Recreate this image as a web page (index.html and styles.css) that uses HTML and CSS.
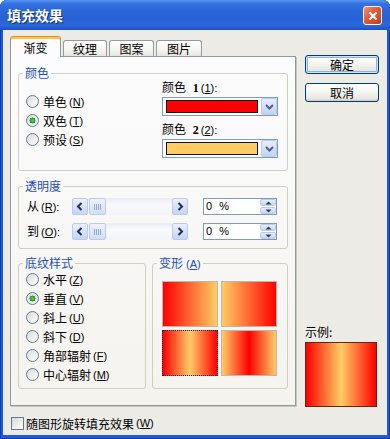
FILE: index.html
```html
<!DOCTYPE html>
<html lang="zh">
<head>
<meta charset="utf-8">
<title>填充效果</title>
<link rel="stylesheet" href="styles.css">
</head>
<body>
<div class="window">
  <div class="titlebar">
    <span class="title">填充效果</span>
    <div class="close"><svg class="xicon" width="10" height="10" viewBox="0 0 10 10"><path d="M1.5 1.5 L8.5 8.5 M8.5 1.5 L1.5 8.5" stroke="#ffffff" stroke-width="2.2" fill="none"/></svg></div>
  </div>
  <div class="client">
    <div class="main">
      <div class="tabctl">
        <div class="tabs">
          <div class="tab active">渐变</div>
          <div class="tab t2">纹理</div>
          <div class="tab t3">图案</div>
          <div class="tab t4">图片</div>
        </div>
        <div class="panel">
          <fieldset class="group g-color">
            <legend>颜色</legend>
            <div class="inner">
              <div class="radios">
                <div class="radio"><span class="rb"></span><span>单色</span><span class="mn">(<u>N</u>)</span></div>
                <div class="radio"><span class="rb on"></span><span>双色</span><span class="mn">(<u>T</u>)</span></div>
                <div class="radio"><span class="rb"></span><span>预设</span><span class="mn">(<u>S</u>)</span></div>
              </div>
              <div class="colors">
                <div class="lbl">颜色 <b class="num">1</b><span class="mn">(<u>1</u>):</span></div>
                <div class="combo"><span class="swatch sw-red"></span><span class="ddbtn"><svg width="9" height="6" viewBox="0 0 9 6"><path d="M1 1 L4.5 4.5 L8 1" stroke="#4D6185" stroke-width="2" fill="none"/></svg></span></div>
                <div class="lbl lbl2">颜色 <b class="num">2</b><span class="mn">(<u>2</u>):</span></div>
                <div class="combo"><span class="swatch sw-yel"></span><span class="ddbtn"><svg width="9" height="6" viewBox="0 0 9 6"><path d="M1 1 L4.5 4.5 L8 1" stroke="#4D6185" stroke-width="2" fill="none"/></svg></span></div>
              </div>
            </div>
          </fieldset>

          <fieldset class="group g-trans">
            <legend>透明度</legend>
            <div class="inner">
              <div class="trow">
                <span class="tlbl">从<span class="mn">(<u>R</u>):</span></span>
                <div class="scroll">
                  <span class="sbtn"><svg width="8" height="9" viewBox="0 0 8 9"><path d="M5.5 1 L2 4.5 L5.5 8" stroke="#1E2F55" stroke-width="2" fill="none"/></svg></span>
                  <span class="track"><span class="thumb"><svg width="8" height="6" viewBox="0 0 8 6"><path d="M0.5 0 V6 M2.5 0 V6 M4.5 0 V6 M6.5 0 V6" stroke="#8FA6D6" stroke-width="1"/></svg></span></span>
                  <span class="sbtn"><svg width="8" height="9" viewBox="0 0 8 9"><path d="M2.5 1 L6 4.5 L2.5 8" stroke="#1E2F55" stroke-width="2" fill="none"/></svg></span>
                </div>
                <div class="edit">
                  <span class="val">0 %</span>
                  <span class="spin">
                    <span class="sp"><svg width="7" height="4" viewBox="0 0 7 4"><path d="M0.5 3.5 L3.5 0.5 L6.5 3.5 Z" fill="#2B3D66"/></svg></span>
                    <span class="sp"><svg width="7" height="4" viewBox="0 0 7 4"><path d="M0.5 0.5 L3.5 3.5 L6.5 0.5 Z" fill="#2B3D66"/></svg></span>
                  </span>
                </div>
              </div>
              <div class="trow">
                <span class="tlbl">到<span class="mn">(<u>O</u>):</span></span>
                <div class="scroll">
                  <span class="sbtn"><svg width="8" height="9" viewBox="0 0 8 9"><path d="M5.5 1 L2 4.5 L5.5 8" stroke="#1E2F55" stroke-width="2" fill="none"/></svg></span>
                  <span class="track"><span class="thumb"><svg width="8" height="6" viewBox="0 0 8 6"><path d="M0.5 0 V6 M2.5 0 V6 M4.5 0 V6 M6.5 0 V6" stroke="#8FA6D6" stroke-width="1"/></svg></span></span>
                  <span class="sbtn"><svg width="8" height="9" viewBox="0 0 8 9"><path d="M2.5 1 L6 4.5 L2.5 8" stroke="#1E2F55" stroke-width="2" fill="none"/></svg></span>
                </div>
                <div class="edit">
                  <span class="val">0 %</span>
                  <span class="spin">
                    <span class="sp"><svg width="7" height="4" viewBox="0 0 7 4"><path d="M0.5 3.5 L3.5 0.5 L6.5 3.5 Z" fill="#2B3D66"/></svg></span>
                    <span class="sp"><svg width="7" height="4" viewBox="0 0 7 4"><path d="M0.5 0.5 L3.5 3.5 L6.5 0.5 Z" fill="#2B3D66"/></svg></span>
                  </span>
                </div>
              </div>
            </div>
          </fieldset>

          <div class="bottom">
            <fieldset class="group g-shade">
              <legend>底纹样式</legend>
              <div class="inner">
                <div class="radio"><span class="rb"></span><span>水平</span><span class="mn">(<u>Z</u>)</span></div>
                <div class="radio"><span class="rb on"></span><span>垂直</span><span class="mn">(<u>V</u>)</span></div>
                <div class="radio"><span class="rb"></span><span>斜上</span><span class="mn">(<u>U</u>)</span></div>
                <div class="radio"><span class="rb"></span><span>斜下</span><span class="mn">(<u>D</u>)</span></div>
                <div class="radio"><span class="rb"></span><span>角部辐射</span><span class="mn">(<u>F</u>)</span></div>
                <div class="radio"><span class="rb"></span><span>中心辐射</span><span class="mn">(<u>M</u>)</span></div>
              </div>
            </fieldset>
            <fieldset class="group g-variant">
              <legend>变形<span class="mn">(<u>A</u>)</span></legend>
              <div class="inner">
                <div class="cell v1"></div>
                <div class="cell v2"></div>
                <div class="cell v3 sel"></div>
                <div class="cell v4"></div>
              </div>
            </fieldset>
          </div>
        </div>
      </div>
      <div class="side">
        <button class="btn default">确定</button>
        <button class="btn cancel">取消</button>
        <div class="sample">
          <div class="slbl">示例:</div>
          <div class="preview"></div>
        </div>
      </div>
    </div>
    <div class="check"><span class="cb"></span><span>随图形旋转填充效果</span><span class="mn">(<u>W</u>)</span></div>
  </div>
</div>
</body>
</html>
```
FILE: styles.css
```css
html, body {
  margin: 0;
  padding: 0;
  background: #ffffff;
}
body {
  font-family: "Noto Sans CJK SC", "Liberation Sans", sans-serif;
  font-size: 12px;
  color: #000;
}
.window {
  width: 390px;
  height: 439px;
  box-sizing: border-box;
  display: flex;
  flex-direction: column;
  padding: 0 3px 4px 3px;
  background: #1F5BD8;
  border-radius: 7px 7px 0 0;
  box-shadow: inset 0 0 0 1px #0A3CB8;
}
.titlebar {
  height: 30px;
  margin: 0 -3px;
  padding: 0 8px 0 7px;
  display: flex;
  align-items: center;
  justify-content: space-between;
  border-radius: 7px 7px 0 0;
  background: linear-gradient(to bottom, #5A96F2 0%, #3473E0 12%, #2A66D8 35%, #2862D6 65%, #2B66DB 85%, #1D52C4 100%);
}
.title {
  color: #fff;
  font-weight: bold;
  font-size: 14px;
  line-height: 16px;
  text-shadow: 1px 1px 0 #10307A;
}
.close {
  width: 19px;
  height: 19px;
  flex: none;
  box-sizing: border-box;
  border: 1px solid #F4F4F4;
  border-radius: 3px;
  background-color: #D9552E;
  background-image: linear-gradient(135deg, #EC9472 0%, #DD5C34 45%, #C23E1B 100%);
  display: flex;
  align-items: center;
  justify-content: center;
  margin-top: 1px;
}
.xicon {
  display: block;
}
.client {
  flex: 1;
  background: #ECEBE6;
  padding: 6px 8px 0 7px;
  display: flex;
  flex-direction: column;
}
.main {
  display: flex;
  gap: 9px;
}
.tabctl {
  width: 286px;
  display: flex;
  flex-direction: column;
}
.tabs {
  height: 20px;
  display: flex;
  align-items: flex-end;
  gap: 2px;
  position: relative;
  z-index: 1;
}
.tab {
  height: 16px;
  box-sizing: border-box;
  border: 1px solid #919B9C;
  border-bottom: none;
  border-radius: 3px 3px 0 0;
  background: linear-gradient(to bottom, #FFFFFF, #F4F4F0 60%, #E6E5DD);
  display: flex;
  align-items: center;
  justify-content: center;
  line-height: 14px;
}
.t2 { width: 44px; }
.t3 { width: 45px; }
.t4 { width: 46px; }
.tab.active {
  width: 51px;
  height: 21px;
  margin-bottom: -1px;
  border-top: 1px solid #E68B2C;
  background: #FCFCFE;
  box-shadow: inset 0 2px 0 #FFC73C;
  padding-top: 1px;
}
.panel {
  width: 286px;
  height: 350px;
  box-sizing: border-box;
  border: 1px solid #919B9C;
  background: linear-gradient(to bottom, #FCFCFE, #F4F3EE);
  padding: 9px 7px 0 7px;
  box-shadow: 1px 1px 0 #C9C7BC;
}
.group {
  margin: 0;
  padding: 0;
  border: 1px solid #D0D0BF;
  border-radius: 3px;
  min-width: 0;
}
.group legend {
  padding: 0 2px;
  margin-left: 4px;
  color: #2450B8;
  font-size: 12px;
  line-height: 14px;
}
.mn {
  font-family: "Liberation Sans", sans-serif;
  font-size: 11px;
  margin-left: 2px;
}
.g-color .inner {
  display: flex;
  padding: 0 0 12px 7px;
}
.radios {
  width: 136px;
  padding-top: 12px;
  display: flex;
  flex-direction: column;
}
.radio {
  height: 19px;
  display: flex;
  align-items: center;
  line-height: 14px;
}
.rb {
  width: 13px;
  height: 13px;
  box-sizing: border-box;
  border: 1px solid #5A7AA2;
  border-radius: 50%;
  background: linear-gradient(135deg, #D9D9D3 0%, #FFFFFF 100%);
  margin-right: 4px;
  flex: none;
}
.rb.on {
  background: radial-gradient(circle at 50% 50%, #5ED15A 0, #2AA526 2.2px, #1E8F1B 2.8px, transparent 3.2px), linear-gradient(135deg, #D9D9D3 0%, #FFFFFF 100%);
}
.colors {
  width: 116px;
  display: flex;
  flex-direction: column;
}
.lbl {
  line-height: 14px;
  white-space: nowrap;
}
.lbl .num {
  font-family: "Liberation Serif", serif;
  font-size: 12px;
  margin-left: 4px;
}
.lbl2 { margin-top: 6px; }
.combo {
  margin-top: 2px;
  height: 19px;
  box-sizing: border-box;
  border: 1px solid #7F9DB9;
  background: #fff;
  display: flex;
  align-items: center;
  padding-left: 3px;
}
.swatch {
  flex: 1;
  height: 13px;
  box-sizing: border-box;
  border: 1px solid #111;
  margin-right: 3px;
}
.sw-red { background: #FF0000; }
.sw-yel { background: #FFCC66; }
.ddbtn {
  width: 16px;
  height: 17px;
  box-sizing: border-box;
  border: 1px solid #BACBEF;
  border-radius: 2px;
  background: linear-gradient(to bottom, #E6EDFD, #C3D2F4);
  display: flex;
  align-items: center;
  justify-content: center;
}
.g-trans {
  margin-top: 8px;
}
.g-trans .inner {
  display: flex;
  flex-direction: column;
  gap: 8px;
  padding: 5px 0 8px 8px;
}
.trow {
  height: 17px;
  display: flex;
  align-items: center;
}
.tlbl {
  width: 45px;
  line-height: 14px;
  white-space: nowrap;
}
.scroll {
  width: 116px;
  height: 17px;
  display: flex;
}
.sbtn {
  width: 16px;
  height: 17px;
  box-sizing: border-box;
  border: 1px solid #BACBEF;
  border-radius: 2px;
  background: linear-gradient(to bottom, #E9EFFD, #C6D4F4);
  display: flex;
  align-items: center;
  justify-content: center;
  flex: none;
}
.track {
  flex: 1;
  display: flex;
  background: linear-gradient(to bottom, #E8ECF4, #FAFAFC 40%, #F3F4F8);
}
.thumb {
  width: 17px;
  margin-left: 1px;
  box-sizing: border-box;
  border: 1px solid #BACBEF;
  border-radius: 2px;
  background: linear-gradient(to bottom, #EEF3FE, #D2DEF8);
  display: flex;
  align-items: center;
  justify-content: center;
}
.edit {
  width: 74px;
  height: 17px;
  margin-left: 15px;
  box-sizing: border-box;
  border: 1px solid #7F9DB9;
  background: #fff;
  display: flex;
  justify-content: space-between;
}
.val {
  font-family: "Liberation Sans", sans-serif;
  font-size: 11px;
  line-height: 15px;
  padding-left: 2px;
  word-spacing: 4px;
}
.spin {
  width: 16px;
  display: flex;
  flex-direction: column;
  gap: 1px;
}
.sp {
  flex: 1;
  box-sizing: border-box;
  border: 1px solid #BACBEF;
  border-radius: 2px;
  background: linear-gradient(to bottom, #E9EFFD, #C6D4F4);
  display: flex;
  align-items: center;
  justify-content: center;
}
.bottom {
  display: flex;
  gap: 6px;
  margin-top: 7px;
}
.g-shade {
  width: 128px;
  box-sizing: border-box;
}
.g-shade .inner {
  display: flex;
  flex-direction: column;
  padding: 0 0 4px 7px;
}
.g-variant {
  width: 136px;
  box-sizing: border-box;
}
.g-variant legend .mn {
  margin-left: 3px;
}
.g-variant .inner {
  display: grid;
  grid-template-columns: 56px 56px;
  grid-auto-rows: 46px;
  gap: 3px;
  padding: 10px 0 0 9px;
}
.cell {
  box-sizing: border-box;
  border: 1px solid #B9B9B2;
}
.v1 { background: linear-gradient(to right, #FF0000, #FFCC66); }
.v2 { background: linear-gradient(to right, #FFCC66, #FF0000); }
.v3 { background: linear-gradient(to right, #FF0000, #FFCC66, #FF0000); }
.v4 { background: linear-gradient(to right, #FFCC66, #FF0000, #FFCC66); }
.cell.sel {
  border: 1px dotted #1A1A40;
}
.side {
  width: 74px;
  display: flex;
  flex-direction: column;
}
.btn {
  width: 74px;
  height: 19px;
  box-sizing: border-box;
  padding: 0;
  border: 1px solid #003C74;
  border-radius: 3px;
  background: linear-gradient(to bottom, #FFFFFF, #F5F5F1 45%, #E8E7E0 85%, #D6D0C5);
  font-family: "Noto Sans CJK SC", sans-serif;
  font-size: 12px;
  line-height: 16px;
  color: #000;
}
.btn.default {
  margin-top: 19px;
  box-shadow: inset 0 0 0 1px #CEE7FF, inset 0 0 0 2px #8FB1E8;
}
.btn.cancel {
  margin-top: 9px;
  box-shadow: inset 0 -1px 0 #D6D0C5;
}
.sample {
  margin-top: auto;
  margin-bottom: -1px;
  display: flex;
  flex-direction: column;
}
.slbl {
  line-height: 14px;
  margin-bottom: 3px;
}
.preview {
  width: 72px;
  height: 65px;
  box-sizing: border-box;
  border: 1px solid #5A2A14;
  background: linear-gradient(to right, #FF0000, #FFCC66, #FF0000);
}
.check {
  margin-top: 11px;
  height: 13px;
  display: flex;
  align-items: center;
  line-height: 13px;
}
.cb {
  width: 13px;
  height: 13px;
  box-sizing: border-box;
  border: 1px solid #5A7AA2;
  background: linear-gradient(135deg, #D9D9D3 0%, #FFFFFF 100%);
  margin: 0 2px 0 1px;
}
```
